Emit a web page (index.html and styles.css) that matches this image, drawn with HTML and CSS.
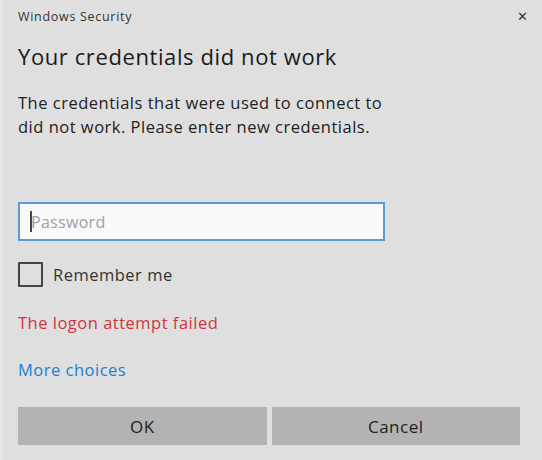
FILE: index.html
```html
<!DOCTYPE html>
<html lang="en">
<head>
    <meta charset="UTF-8">
    <meta name="viewport" content="width=device-width, initial-scale=1.0">
    <title>Windows Security</title>
    <link rel="stylesheet" href="styles.css">
</head>
<body>
<div class="dialog">
    <div class="titlebar">
        <span class="app-name">Windows Security</span>
        <span class="close">&#x2715;</span>
    </div>
    <h1>Your credentials did not work</h1>
    <p class="message">The credentials that were used to connect to<br>did not work. Please enter new credentials.</p>
    <div class="field">
        <span class="caret"></span>
        <input type="password" placeholder="Password">
    </div>
    <label class="remember">
        <span class="checkbox"></span>
        Remember me
    </label>
    <div class="error">The logon attempt failed</div>
    <a class="more" href="#">More choices</a>
    <div class="buttons">
        <button>OK</button>
        <button>Cancel</button>
    </div>
</div>
</body>
</html>
```

FILE: styles.css
```css
body {
    margin: 0;
    font-family: "Open Sans", "Noto Sans", sans-serif;
    background-color: #dfdfdf;
    color: #222;
}
.dialog {
    height: 460px;
    box-sizing: border-box;
    border-left: 3px solid #e6e6e6;
    padding: 0 22px 0 15px;
    display: flex;
    flex-direction: column;
    align-items: flex-start;
}
.titlebar {
    align-self: stretch;
    display: flex;
    justify-content: space-between;
    align-items: center;
    height: 32px;
}
.app-name {
    font-size: 12.5px;
    letter-spacing: 0.7px;
    color: #333;
}
.close {
    font-size: 13px;
    color: #333;
    margin-right: -8px;
}
h1 {
    font-size: 22px;
    letter-spacing: 0.6px;
    font-weight: normal;
    margin: 9px 0 0;
    color: #1a1a1a;
    line-height: 30px;
}
.message {
    font-size: 16.5px;
    letter-spacing: 0.5px;
    line-height: 24px;
    margin: 20px 0 0;
    color: #222;
}
.field {
    position: relative;
    width: 367px;
    margin-top: 63px;
}
.field input {
    width: 100%;
    box-sizing: border-box;
    height: 39px;
    border: 2px solid #5a9bd5;
    background-color: #f9f9f9;
    font-family: inherit;
    font-size: 16px;
    letter-spacing: 0.3px;
    padding: 0 11px;
    outline: none;
}
.field input::placeholder {
    color: #a0a0a0;
}
.caret {
    position: absolute;
    left: 12px;
    top: 9px;
    width: 2px;
    height: 21px;
    background-color: #444;
}
.remember {
    display: flex;
    align-items: center;
    height: 25px;
    margin-top: 21px;
    font-size: 16.5px;
    letter-spacing: 0.5px;
    color: #333;
}
.checkbox {
    box-sizing: border-box;
    width: 25px;
    height: 25px;
    border: 2px solid #444;
    margin-right: 10px;
    border-radius: 1px;
}
.error {
    margin-top: 24px;
    font-size: 16.5px;
    letter-spacing: 0.5px;
    line-height: 24px;
    color: #d0343b;
}
.more {
    margin-top: 23px;
    font-size: 16.5px;
    letter-spacing: 0.5px;
    line-height: 24px;
    color: #1a7fd4;
    text-decoration: none;
}
.buttons {
    align-self: stretch;
    display: flex;
    gap: 5px;
    margin-top: 25px;
}
.buttons button {
    flex: 1;
    height: 38px;
    border: none;
    background-color: #b3b3b3;
    font-family: inherit;
    font-size: 17px;
    letter-spacing: 0.5px;
    color: #222;
}
```
